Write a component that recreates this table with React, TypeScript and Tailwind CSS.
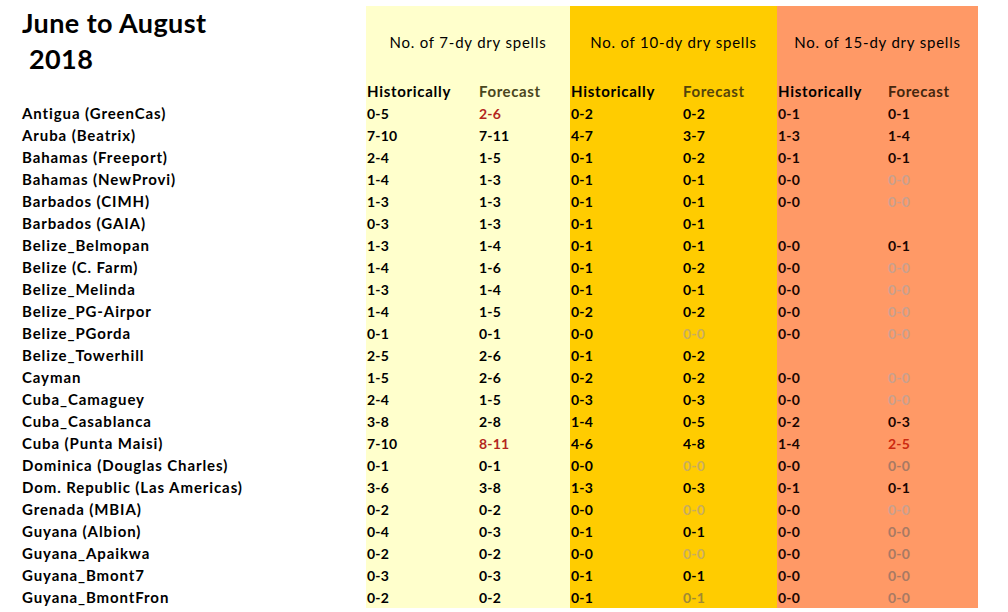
type Tone = 'n' | 'red' | 'lt' | 'dk'
type Cell = [string, Tone?]

interface Row {
  name: string
  h7: string
  f7: Cell
  h10: string
  f10: Cell
  h15: string
  f15: Cell
}

const rows: Row[] = [
  { name: 'Antigua (GreenCas)', h7: '0-5', f7: ['2-6', 'red'], h10: '0-2', f10: ['0-2'], h15: '0-1', f15: ['0-1'] },
  { name: 'Aruba (Beatrix)', h7: '7-10', f7: ['7-11'], h10: '4-7', f10: ['3-7'], h15: '1-3', f15: ['1-4'] },
  { name: 'Bahamas (Freeport)', h7: '2-4', f7: ['1-5'], h10: '0-1', f10: ['0-2'], h15: '0-1', f15: ['0-1'] },
  { name: 'Bahamas (NewProvi)', h7: '1-4', f7: ['1-3'], h10: '0-1', f10: ['0-1'], h15: '0-0', f15: ['0-0', 'lt'] },
  { name: 'Barbados (CIMH)', h7: '1-3', f7: ['1-3'], h10: '0-1', f10: ['0-1'], h15: '0-0', f15: ['0-0', 'lt'] },
  { name: 'Barbados (GAIA)', h7: '0-3', f7: ['1-3'], h10: '0-1', f10: ['0-1'], h15: '', f15: [''] },
  { name: 'Belize_Belmopan', h7: '1-3', f7: ['1-4'], h10: '0-1', f10: ['0-1'], h15: '0-0', f15: ['0-1'] },
  { name: 'Belize (C. Farm)', h7: '1-4', f7: ['1-6'], h10: '0-1', f10: ['0-2'], h15: '0-0', f15: ['0-0', 'lt'] },
  { name: 'Belize_Melinda', h7: '1-3', f7: ['1-4'], h10: '0-1', f10: ['0-1'], h15: '0-0', f15: ['0-0', 'lt'] },
  { name: 'Belize_PG-Airpor', h7: '1-4', f7: ['1-5'], h10: '0-2', f10: ['0-2'], h15: '0-0', f15: ['0-0', 'lt'] },
  { name: 'Belize_PGorda', h7: '0-1', f7: ['0-1'], h10: '0-0', f10: ['0-0', 'lt'], h15: '0-0', f15: ['0-0', 'lt'] },
  { name: 'Belize_Towerhill', h7: '2-5', f7: ['2-6'], h10: '0-1', f10: ['0-2'], h15: '', f15: [''] },
  { name: 'Cayman', h7: '1-5', f7: ['2-6'], h10: '0-2', f10: ['0-2'], h15: '0-0', f15: ['0-0', 'lt'] },
  { name: 'Cuba_Camaguey', h7: '2-4', f7: ['1-5'], h10: '0-3', f10: ['0-3'], h15: '0-0', f15: ['0-0', 'lt'] },
  { name: 'Cuba_Casablanca', h7: '3-8', f7: ['2-8'], h10: '1-4', f10: ['0-5'], h15: '0-2', f15: ['0-3'] },
  { name: 'Cuba (Punta Maisi)', h7: '7-10', f7: ['8-11', 'red'], h10: '4-6', f10: ['4-8'], h15: '1-4', f15: ['2-5', 'red'] },
  { name: 'Dominica (Douglas Charles)', h7: '0-1', f7: ['0-1'], h10: '0-0', f10: ['0-0', 'lt'], h15: '0-0', f15: ['0-0', 'dk'] },
  { name: 'Dom. Republic (Las Americas)', h7: '3-6', f7: ['3-8'], h10: '1-3', f10: ['0-3'], h15: '0-1', f15: ['0-1'] },
  { name: 'Grenada (MBIA)', h7: '0-2', f7: ['0-2'], h10: '0-0', f10: ['0-0', 'lt'], h15: '0-0', f15: ['0-0', 'lt'] },
  { name: 'Guyana (Albion)', h7: '0-4', f7: ['0-3'], h10: '0-1', f10: ['0-1'], h15: '0-0', f15: ['0-0', 'dk'] },
  { name: 'Guyana_Apaikwa', h7: '0-2', f7: ['0-2'], h10: '0-0', f10: ['0-0', 'lt'], h15: '0-0', f15: ['0-0', 'dk'] },
  { name: 'Guyana_Bmont7', h7: '0-3', f7: ['0-3'], h10: '0-1', f10: ['0-1'], h15: '0-0', f15: ['0-0', 'dk'] },
  { name: 'Guyana_BmontFron', h7: '0-2', f7: ['0-2'], h10: '0-1', f10: ['0-1', 'dk'], h15: '0-0', f15: ['0-0', 'dk'] },
]

// tone colours differ per band since the greys are washed over the fill
const toneClass: Record<string, Record<Tone, string>> = {
  pale: { n: 'text-black', red: 'text-[#b3261e]', lt: 'text-[#c8c8a8]', dk: 'text-[#8a8a70]' },
  gold: { n: 'text-black', red: 'text-[#b3261e]', lt: 'text-[#c9ad5e]', dk: 'text-[#a08a34]' },
  salmon: { n: 'text-[#1a0500]', red: 'text-[#cc2a10]', lt: 'text-[#c9a08e]', dk: 'text-[#a87a64]' },
}

interface BandProps {
  title: string
  bg: string
  kind: 'pale' | 'gold' | 'salmon'
  hist: string[]
  fc: Cell[]
  histW: string
  fcHead: string
}

function Band({ title, bg, kind, hist, fc, histW, fcHead }: BandProps) {
  return (
    <div className={`flex flex-col ${bg}`}>
      {/* Band header */}
      <div className="h-[74px] flex items-center justify-center pb-[2px] text-[15px] tracking-[0.8px] text-black">
        {title}
      </div>
      <div className="flex">
        <div className={`${histW} flex flex-col pl-px`}>
          <div className="h-[22px] flex items-center text-[15px] font-bold tracking-[0.7px] text-black">Historically</div>
          {hist.map((v, i) => (
            <div key={i} className={`h-[22px] flex items-center text-[14px] font-bold tracking-[0.2px] ${toneClass[kind].n}`}>
              {v}
            </div>
          ))}
        </div>
        <div className="flex-1 flex flex-col">
          <div className={`h-[22px] flex items-center text-[15px] font-bold tracking-[0.6px] ${fcHead}`}>Forecast</div>
          {fc.map(([v, t], i) => (
            <div key={i} className={`h-[22px] flex items-center text-[14px] font-bold tracking-[0.2px] ${toneClass[kind][t ?? 'n']}`}>
              {v}
            </div>
          ))}
        </div>
      </div>
    </div>
  )
}

export default function App() {
  return (
    <div className="w-[1008px] h-[612px] bg-white flex font-['Lato','Liberation_Sans',sans-serif] overflow-hidden">
      {/* Station names */}
      <div className="w-[366px] flex flex-col pl-[22px]">
        <div className="h-[102px] pt-[5px] text-[27px] font-bold tracking-[0.4px] leading-[36px] text-black">
          <div>June to August</div>
          <div className="pl-[7px]">2018</div>
        </div>
        {rows.map((r) => (
          <div key={r.name} className="h-[22px] flex items-center text-[15px] font-bold tracking-[0.9px] text-black whitespace-nowrap">
            {r.name}
          </div>
        ))}
      </div>

      {/* Value bands */}
      <div className="flex mt-[6px] h-[602px]">
        <div className="w-[204px]">
          <Band
            title="No. of 7-dy dry spells"
            bg="bg-[#ffffcc]"
            kind="pale"
            hist={rows.map((r) => r.h7)}
            fc={rows.map((r) => r.f7)}
            histW="w-[113px]"
            fcHead="text-[#4a4620]"
          />
        </div>
        <div className="w-[207px]">
          <Band
            title="No. of 10-dy dry spells"
            bg="bg-[#ffcc00]"
            kind="gold"
            hist={rows.map((r) => r.h10)}
            fc={rows.map((r) => r.f10)}
            histW="w-[113px]"
            fcHead="text-[#54440c]"
          />
        </div>
        <div className="w-[201px]">
          <Band
            title="No. of 15-dy dry spells"
            bg="bg-[#ff9966]"
            kind="salmon"
            hist={rows.map((r) => r.h15)}
            fc={rows.map((r) => r.f15)}
            histW="w-[111px]"
            fcHead="text-[#44260e]"
          />
        </div>
      </div>
    </div>
  )
}
